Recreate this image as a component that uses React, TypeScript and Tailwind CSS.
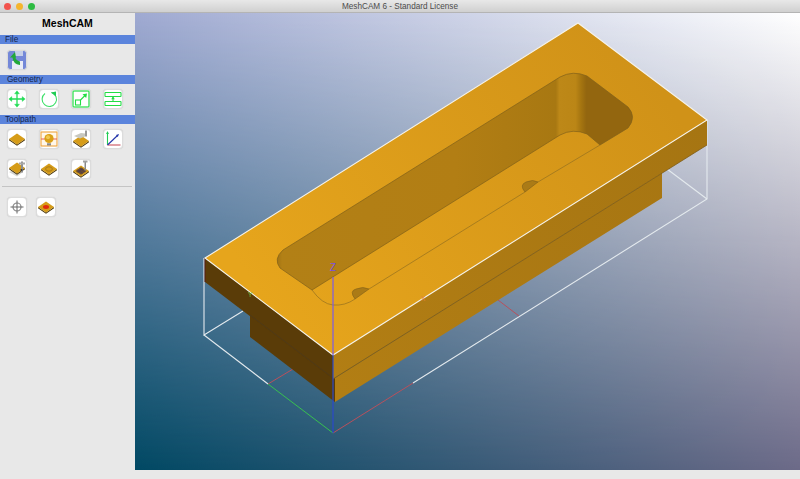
import React from 'react';

function Btn({ children, className = 'bg-white' }: { children: React.ReactNode; className?: string }) {
  return (
    <div className={`w-5 h-5 rounded-[4px] border border-[#dcdcdc] shadow-[0_0_1px_#c4c4c4] overflow-hidden shrink-0 ${className}`}>
      <svg viewBox="0 0 18 18" className="w-full h-full block">
        {children}
      </svg>
    </div>
  );
}

function Plate({ children, y = 0 }: { children?: React.ReactNode; y?: number }) {
  return (
    <g transform={`translate(0 ${y})`}>
      <polygon points="1,9 9,14.5 17,9 17,10.2 9,15.7 1,10.2" fill="#4a360c" />
      <polygon points="1,9 9,3.5 17,9 9,14.5" fill="#d69c18" />
      {children}
    </g>
  );
}

function SectionBar({ label, indent = 'pl-[5px]' }: { label: string; indent?: string }) {
  return (
    <div className={`h-[9px] bg-[#5b84dc] text-[8.2px] leading-[9px] text-[#14264c] ${indent}`}>{label}</div>
  );
}

function Sidebar() {
  return (
    <div className="w-[135px] flex flex-col shrink-0 bg-[#e8e8e8]">
      <div className="h-[22px] pt-[2px] text-center text-[10.5px] leading-[17px] font-bold text-black">MeshCAM</div>
      <SectionBar label="File" />
      <div className="h-[31px] pt-[6px] pl-[7px] flex">
        <Btn className="bg-[#7f93dc]">
          <rect x="0" y="0" width="18" height="18" fill="#7488d8" />
          <rect x="4" y="10" width="11" height="8" fill="#e9ecf6" />
          <rect x="7" y="0" width="8" height="5" fill="#c6cfe8" />
          <path d="M2 6.5L7 1L8 6.5L7.5 6.5Q7.5 9 12 10.5L12 14Q5 13 4.5 6.5Z" fill="#22a83a" />
        </Btn>
      </div>
      <SectionBar label="Geometry" indent="pl-[7px]" />
      <div className="h-[31px] pt-[5px] pl-[7px] flex gap-[12px]">
        <Btn>
          <g stroke="#22dd55" strokeWidth="1.3" fill="#22dd55">
            <path d="M3 9H15M9 3V15" />
            <path d="M9 0.8L6.6 3.8H11.4ZM9 17.2L6.6 14.2H11.4ZM0.8 9L3.8 6.6V11.4ZM17.2 9L14.2 6.6V11.4Z" strokeWidth="0.4" />
          </g>
        </Btn>
        <Btn>
          <path d="M11.5 2.4A7.2 7.2 0 1 1 5 3.5" fill="none" stroke="#3fe06a" strokeWidth="1.1" />
          <path d="M16 1.5L16 6.5L11 2.6Z" fill="#22cc55" />
        </Btn>
        <Btn>
          <rect x="1" y="1" width="16" height="16" fill="none" stroke="#22dd44" strokeWidth="1.2" />
          <rect x="3.5" y="10" width="5" height="5" fill="none" stroke="#22dd44" strokeWidth="1.1" />
          <path d="M8.5 10L13 5.5" stroke="#22dd44" strokeWidth="1.1" />
          <path d="M15 3.5L10.5 4.2L14.2 7.9Z" fill="#22dd44" />
        </Btn>
        <Btn>
          <g fill="none" stroke="#22dd44" strokeWidth="1.1">
            <rect x="1" y="2.5" width="16" height="4" rx="0.5" />
            <rect x="1" y="11.5" width="16" height="4" rx="0.5" />
            <path d="M9 6.5V11.5" />
          </g>
          <path d="M9 6.5L7.2 9.2H10.8Z" fill="#22dd44" />
        </Btn>
      </div>
      <SectionBar label="Toolpath" />
      <div className="flex flex-col gap-[10px] pt-[5px] pl-[7px]">
        <div className="flex gap-[12px]">
          <Btn>
            <Plate />
          </Btn>
          <Btn>
            <rect x="1" y="2" width="16" height="14" fill="#fff7ea" stroke="#eea53c" strokeWidth="1.1" />
            <path d="M1 9H17" stroke="#e8605a" strokeWidth="1" />
            <circle cx="9" cy="8.5" r="4.6" fill="#d9a016" />
            <circle cx="8" cy="7.2" r="2" fill="#f0c850" />
            <path d="M7 13.2H11V15.5H7Z" fill="#8a8a8a" />
          </Btn>
          <Btn>
            <Plate y={2} />
            <path d="M2 6L9 3L13 3.5L13 6.5L8 8.5Z" fill="#c8c8c0" />
            <rect x="13" y="0.5" width="2" height="6" fill="#9a9a9a" />
          </Btn>
          <Btn>
            <path d="M3.5 15V3" stroke="#22cc55" strokeWidth="1.1" />
            <path d="M3.5 1L2.1 4H4.9Z" fill="#22cc55" />
            <path d="M3.5 15H16.5" stroke="#d88088" strokeWidth="1.4" />
            <path d="M3.5 15L13.5 5.5" stroke="#2233aa" strokeWidth="1.1" />
            <path d="M15 4L12 5L13.8 7Z" fill="#2233aa" />
          </Btn>
        </div>
        <div className="flex gap-[12px]">
          <Btn>
            <path d="M1 12L9 16.5L15 12L9 9Z" fill="#d4d4d0" />
            <Plate y={-1} />
            <rect x="13" y="1.5" width="2" height="11" fill="#8f8f8f" />
            <rect x="11" y="2.5" width="6" height="2" fill="#a8a8a8" />
            <circle cx="13.5" cy="10" r="1.1" fill="#333333" />
          </Btn>
          <Btn>
            <Plate />
            <ellipse cx="9" cy="9" rx="3.4" ry="2.2" fill="none" stroke="#a87a18" strokeWidth="1" />
          </Btn>
          <Btn>
            <Plate y={2}>
              <polygon points="3.5,9 9,5.3 14.5,9 9,12.7" fill="#6a4c30" />
              <path d="M5.5 7.7L11 11.4M7.5 6.3L13 10M5.5 10.3L11 6.6" stroke="#3a3060" strokeWidth="0.5" />
            </Plate>
            <rect x="12.5" y="1.5" width="1.5" height="9" fill="#8a8a8a" />
            <rect x="11" y="0.5" width="4.5" height="2" fill="#a0a0a0" />
          </Btn>
        </div>
      </div>
      <div className="h-px bg-[#c4c4c4] mt-[7px] ml-[2px] mr-[3px]" />
      <div className="flex gap-[9px] pt-[10px] pl-[7px]">
        <Btn>
          <circle cx="9" cy="9" r="4" fill="none" stroke="#8a8a8a" strokeWidth="1.2" />
          <path d="M9 2.5V15.5M2.5 9H15.5" stroke="#666666" strokeWidth="1" />
        </Btn>
        <Btn>
          <Plate />
          <ellipse cx="9" cy="9" rx="3" ry="1.9" fill="#e02a10" />
        </Btn>
      </div>
    </div>
  );
}

function ModelView() {
  return (
    <svg viewBox="135 13 665 457" className="w-[665px] h-[457px] block">
      <defs>
        <linearGradient id="bgTop" gradientUnits="userSpaceOnUse" x1="135" y1="0" x2="800" y2="0">
          <stop offset="0" stopColor="#a0aad2" />
          <stop offset="1" stopColor="#ffffff" />
        </linearGradient>
        <linearGradient id="bgBottom" gradientUnits="userSpaceOnUse" x1="135" y1="0" x2="800" y2="0">
          <stop offset="0" stopColor="#004863" />
          <stop offset="1" stopColor="#6c6a88" />
        </linearGradient>
        <linearGradient id="fade" gradientUnits="userSpaceOnUse" x1="0" y1="13" x2="0" y2="470">
          <stop offset="0" stopColor="#000000" />
          <stop offset="1" stopColor="#ffffff" />
        </linearGradient>
        <mask id="fadeMask" maskUnits="userSpaceOnUse" x="135" y="13" width="665" height="457">
          <rect x="135" y="13" width="665" height="457" fill="url(#fade)" />
        </mask>
        <linearGradient id="topFace" gradientUnits="userSpaceOnUse" x1="640" y1="60" x2="270" y2="310">
          <stop offset="0" stopColor="#d09218" />
          <stop offset="1" stopColor="#e6a51c" />
        </linearGradient>
        <linearGradient id="sideFace" gradientUnits="userSpaceOnUse" x1="707" y1="130" x2="335" y2="390">
          <stop offset="0" stopColor="#a67512" />
          <stop offset="1" stopColor="#b27e14" />
        </linearGradient>
        <linearGradient id="wall" gradientUnits="userSpaceOnUse" x1="275" y1="0" x2="635" y2="0">
          <stop offset="0" stopColor="#9c7012" />
          <stop offset="0.02" stopColor="#b28016" />
          <stop offset="0.5" stopColor="#b27e14" />
          <stop offset="0.78" stopColor="#a87812" />
          <stop offset="0.79" stopColor="#bd8818" />
          <stop offset="0.835" stopColor="#bb8616" />
          <stop offset="0.85" stopColor="#a57510" />
          <stop offset="0.865" stopColor="#93660f" />
          <stop offset="1" stopColor="#93660f" />
        </linearGradient>
      </defs>

      <rect x="135" y="13" width="665" height="457" fill="url(#bgTop)" />
      <rect x="135" y="13" width="665" height="457" fill="url(#bgBottom)" mask="url(#fadeMask)" />

      {/* bounding box behind the part */}
      <g stroke="#e4eaee" strokeWidth="1.1" fill="none">
        <path d="M204 258V335L243 311" />
        <path d="M204 335L268 384" />
        <path d="M413 383L707 199V120" />
        <path d="M707 199L667 169" />
      </g>
      <path d="M268 384L293 369M498 300L519 316" stroke="#b8505c" strokeWidth="1" fill="none" />
      <path d="M268 384L333 433" stroke="#38c050" strokeWidth="1" fill="none" />
      <path d="M333 433L413 383" stroke="#b8505c" strokeWidth="1" fill="none" />

      {/* lower block */}
      <polygon points="250,315 335,378 335,402 250,337" fill="#5a3c08" />
      <polygon points="335,378 662,173 662,198 335,402" fill="url(#sideFace)" />
      {/* flange */}
      <polygon points="205,258 333,355 333,379 205,282" fill="#5a3c08" />
      <polygon points="333,355 707,120 707,145 333,379" fill="url(#sideFace)" />
      <path d="M205 258V282" stroke="#5a1a10" strokeWidth="1" />
      <path d="M333 379L707 145" stroke="#7d5a14" strokeWidth="0.8" />
      <path d="M250 315L333 378" stroke="#4a3a20" strokeWidth="0.7" />

      {/* top face */}
      <polygon points="205,258 578,23 707,120 333,355" fill="url(#topFace)" />

      {/* pocket */}
      <path
        d="M283 250L560 77Q573 70 587 76L628 107Q637 117 628 128L600 145L587 134Q573 128 560 135L312 290L280 268Q273 259 283 250Z"
        fill="url(#wall)"
        stroke="#80601a"
        strokeWidth="0.7"
      />
      <path d="M355 299Q349 291 356 289Q363 286 369 289Z" fill="#ab7b16" stroke="#80601a" strokeWidth="0.6" />
      <path d="M525 192Q519 185 526 182Q533 179 538 182Z" fill="#ab7b16" stroke="#80601a" strokeWidth="0.6" />
      <path
        d="M600 145L538 182M525 192L369 289M355 299Q345 306 333 305Q322 304 312 290"
        stroke="#94701f"
        strokeWidth="0.7"
        fill="none"
      />

      <polygon points="205,258 578,23 707,120 333,355" fill="none" stroke="#f6f4ec" strokeWidth="1.1" />

      {/* axes */}
      <path d="M333 277V355" stroke="#7a5ce8" strokeWidth="1.2" />
      <path d="M333 355V433" stroke="#2a48cc" strokeWidth="1.2" />
      <g fontFamily="'Liberation Sans', sans-serif" fontSize="10" textAnchor="middle">
        <text x="333" y="271" fill="#7a50e0">Z</text>
        <text x="250" y="297" fill="#6fbe3a" fontSize="7">Y</text>
        <text x="423" y="301" fill="#e0803a" fontSize="7">X</text>
      </g>
    </svg>
  );
}

export default function App() {
  return (
    <div className="w-[800px] h-[479px] flex flex-col overflow-hidden bg-[#e8e8e8] font-['Liberation_Sans',sans-serif]">
      <div className="h-[13px] shrink-0 relative bg-gradient-to-b from-[#e8e8e8] to-[#d0d0d0] border-b border-[#b4b4b4] flex items-center justify-center">
        <div className="absolute left-[4px] top-[3px] flex gap-[5px]">
          <div className="w-[7px] h-[7px] rounded-full bg-[#f2544e]" />
          <div className="w-[7px] h-[7px] rounded-full bg-[#f5b52e]" />
          <div className="w-[7px] h-[7px] rounded-full bg-[#2dbb42]" />
        </div>
        <span className="text-[8.2px] leading-[13px] text-[#4c4c4c]">MeshCAM 6 - Standard License</span>
      </div>
      <div className="flex flex-1 min-h-0">
        <Sidebar />
        <div className="flex-1 pb-[9px]">
          <ModelView />
        </div>
      </div>
    </div>
  );
}
